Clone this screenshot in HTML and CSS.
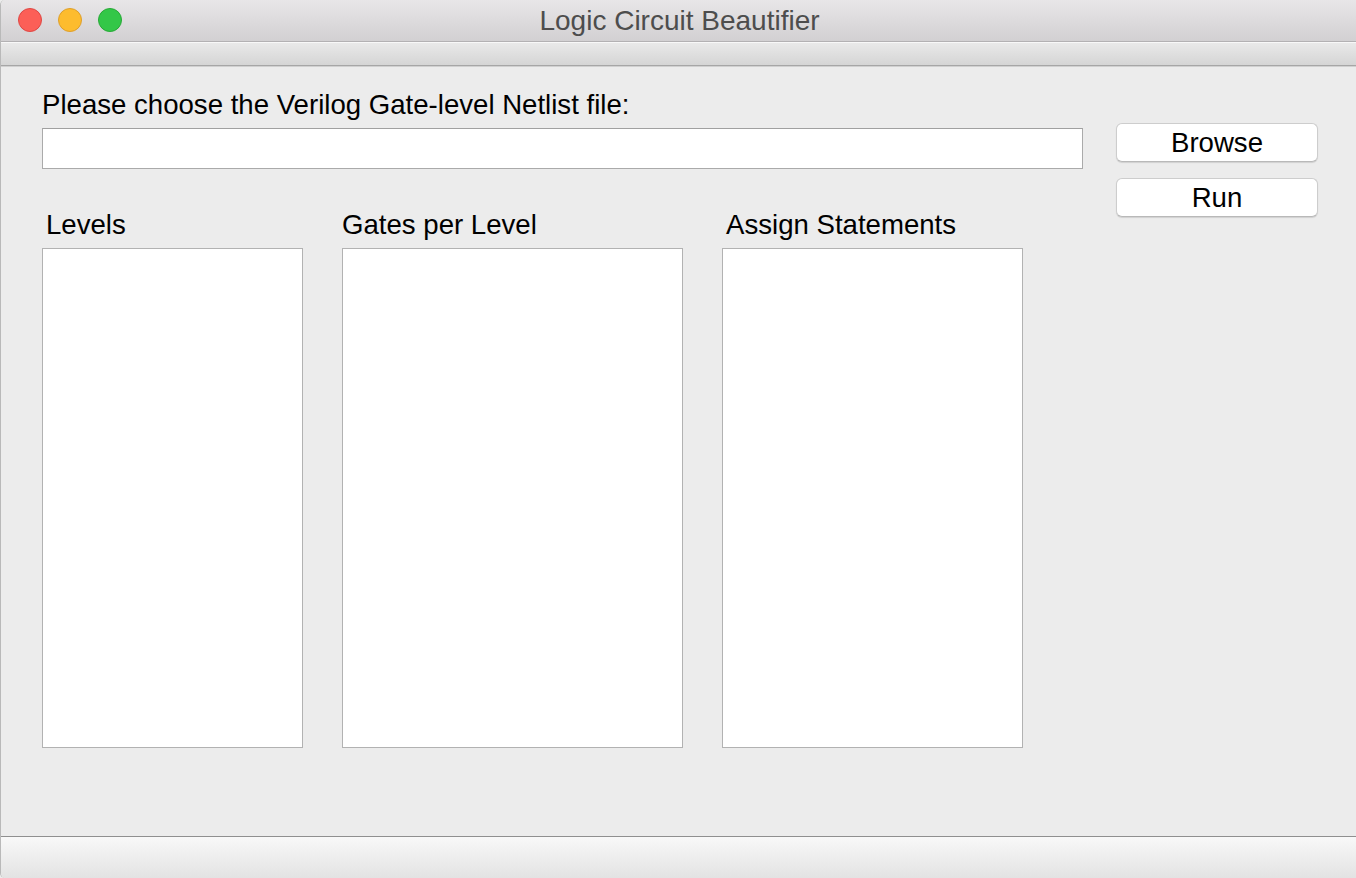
FILE: index.html
```html
<!DOCTYPE html>
<html lang="en">
<head>
<meta charset="utf-8">
<title>Logic Circuit Beautifier</title>
<link rel="stylesheet" href="styles.css">
</head>
<body>
<div class="window">
  <header class="titlebar">
    <div class="lights">
      <span class="light light-red"></span>
      <span class="light light-yellow"></span>
      <span class="light light-green"></span>
    </div>
    <div class="title">Logic Circuit Beautifier</div>
    <div class="spacer"></div>
  </header>
  <div class="toolbar"></div>
  <main class="content">
    <div class="main-col">
      <label class="prompt">Please choose the Verilog Gate-level Netlist file:</label>
      <div class="path-input"></div>
      <div class="lists">
        <section class="col col-levels">
          <h2 class="col-title">Levels</h2>
          <div class="listbox"></div>
        </section>
        <section class="col col-gates">
          <h2 class="col-title">Gates per Level</h2>
          <div class="listbox"></div>
        </section>
        <section class="col col-assign">
          <h2 class="col-title">Assign Statements</h2>
          <div class="listbox"></div>
        </section>
      </div>
    </div>
    <div class="actions">
      <button class="btn">Browse</button>
      <button class="btn">Run</button>
    </div>
  </main>
  <footer class="statusbar"></footer>
</div>
</body>
</html>
```

FILE: styles.css
```css
* { box-sizing: border-box; }
html, body {
  margin: 0;
  padding: 0;
  background: #ececec;
}
body {
  font-family: "Liberation Sans", Arial, sans-serif;
  color: #000;
}
.window {
  width: 1356px;
  height: 878px;
  display: flex;
  flex-direction: column;
  background: #ececec;
  border-left: 1px solid #b9b9b9;
  border-radius: 5px 0 0 5px;
  overflow: hidden;
}
.titlebar {
  height: 42px;
  flex: none;
  display: grid;
  grid-template-columns: 1fr auto 1fr;
  align-items: center;
  background: linear-gradient(#e8e6e8, #d2d0d2);
  border-bottom: 1px solid #b3b1b3;
}
.lights {
  display: flex;
  gap: 16px;
  padding-left: 17px;
  padding-bottom: 1px;
}
.light {
  width: 24px;
  height: 24px;
  border-radius: 50%;
  display: block;
}
.light-red { background: #fc5f57; border: 1px solid #df4744; }
.light-yellow { background: #fdbc2e; border: 1px solid #de9f2b; }
.light-green { background: #33c748; border: 1px solid #27a936; }
.title {
  font-size: 28px;
  line-height: 41px;
  color: #4d4d4d;
  white-space: nowrap;
  padding-left: 2px;
}
.toolbar {
  height: 24px;
  flex: none;
  background: linear-gradient(#e9e9e9, #d5d5d5);
  border-top: 1px solid #f8f8f8;
  border-bottom: 1px solid #a6a6a6;
  box-shadow: 0 1px 0 #d0d0d0;
}
.content {
  flex: 1;
  display: flex;
  align-items: flex-start;
  padding: 24px 0 0 41px;
}
.main-col {
  width: 1041px;
  flex: none;
}
.prompt {
  display: block;
  font-size: 27.6px;
  line-height: 30px;
  white-space: nowrap;
}
.path-input {
  margin-top: 8px;
  height: 41px;
  background: #fff;
  border: 1px solid #aaaaaa;
  border-top-color: #a0a0a0;
}
.lists {
  margin-top: 41px;
  display: flex;
  gap: 39px;
}
.col-title {
  margin: 0;
  font-size: 27.6px;
  font-weight: normal;
  line-height: 30px;
  white-space: nowrap;
}
.col-levels { width: 261px; }
.col-levels .col-title, .col-assign .col-title { padding-left: 4px; }
.col-gates { width: 341px; }
.col-assign { width: 301px; }
.listbox {
  margin-top: 8px;
  height: 500px;
  background: #fff;
  border: 1px solid #b2b2b2;
}
.actions {
  margin-top: 33px;
  margin-left: 33px;
  display: flex;
  flex-direction: column;
  gap: 16px;
}
.btn {
  width: 202px;
  height: 39px;
  padding: 0;
  font-family: "Liberation Sans", Arial, sans-serif;
  font-size: 27.6px;
  color: #000;
  background: #fff;
  border: 1px solid #cdcdcd;
  border-bottom-color: #b9b9b9;
  border-radius: 6px;
  box-shadow: 0 1px 1px rgba(0,0,0,0.12);
}
.statusbar {
  height: 42px;
  flex: none;
  background: linear-gradient(#f8f8f8, #e3e3e3);
  border-top: 1px solid #8f8f8f;
}
```
